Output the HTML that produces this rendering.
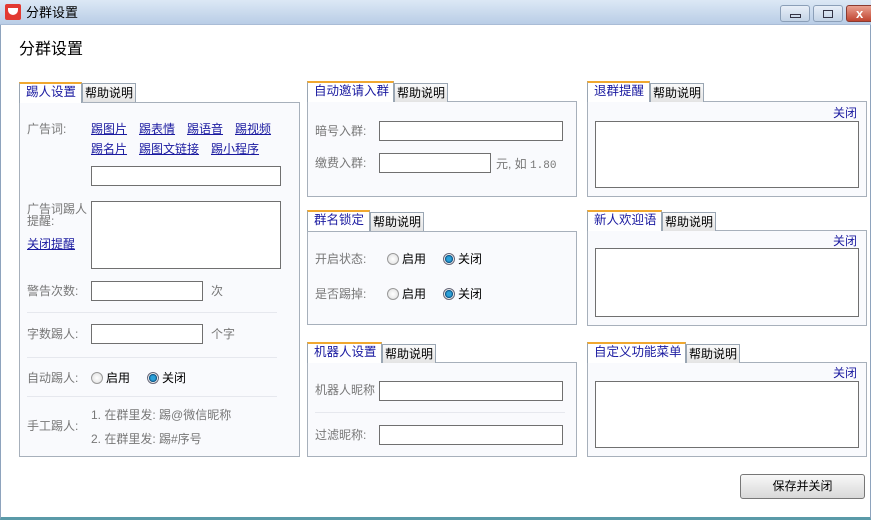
<!DOCTYPE html>
<html><head><meta charset="utf-8"><style>
*{box-sizing:border-box;margin:0;padding:0}
body{width:871px;height:520px;position:relative;overflow:hidden;background:#fff;font-family:"Liberation Sans","Noto Sans CJK SC",sans-serif;font-size:12px;line-height:14px;color:#000}
.a{position:absolute}
.tb{left:0;top:0;width:871px;height:25px;background:linear-gradient(#dce8f5,#b9cde6);border-bottom:1px solid #a9bcd6}
.frame{left:0;top:25px;width:871px;height:495px;border-left:1px solid #8ea3bd;border-right:1px solid #8ea3bd;border-bottom:3px solid #5a9aa8}
.tab{height:21px;border:1px solid #9aa6b3;border-bottom:none;background:#fff;border-top:2px solid #f0a830;color:#1a1aa0;padding:1px 6px 0;white-space:nowrap;font-size:12.5px}
.tab2{height:19px;border:1px solid #9aa6b3;border-bottom:none;background:linear-gradient(#fafafa,#e4e4e4);padding:1px 2px 0;white-space:nowrap;font-size:12px;line-height:16px}
.box{border:1px solid #a7b0bb;background:#f9fafd}
.in{border:1px solid #707070;background:#fff}
.g{color:#777}
.lk{color:#1a1aa0;text-decoration:underline}
.rd{display:inline-block;width:12px;height:12px;border-radius:50%;border:1px solid #999;background:radial-gradient(#fff,#ddd);vertical-align:-2px;margin-right:3px}
.rd.on{background:radial-gradient(#2aa0d8 30%,#0d4f80 55%,#eee 60%);border-color:#667}
.hr{height:1px;background:#e6e8ee}
.bl{color:#1a1aa0}
</style></head><body>
<div class="a frame"></div>
<div class="a tb"></div>
<div class="a" style="left:5px;top:4px;width:16px;height:16px;background:#e23a32;border-radius:2px"><div class="a" style="left:3px;top:4px;width:10px;height:7px;border-radius:0 0 6px 6px;background:#fff"></div></div>
<div class="a" style="left:26px;top:5px;font-size:13px;line-height:15px">分群设置</div>
<div class="a" style="left:780px;top:5px;width:30px;height:17px;border:1px solid #8b9fb8;border-radius:3px;background:linear-gradient(#e8eff8,#c3d3e6)"><div class="a" style="left:9px;top:8px;width:11px;height:4px;border:1px solid #334"></div></div>
<div class="a" style="left:813px;top:5px;width:30px;height:17px;border:1px solid #8b9fb8;border-radius:3px;background:linear-gradient(#e8eff8,#c3d3e6)"><div class="a" style="left:9px;top:4px;width:10px;height:8px;border:1px solid #334"></div></div>
<div class="a" style="left:846px;top:5px;width:28px;height:17px;border:1px solid #8a3a30;border-radius:3px;background:linear-gradient(#e9a090,#c04530);color:#fff;font-weight:bold;font-size:13px;padding-left:9px;line-height:15px">x</div>
<div class="a" style="left:19px;top:40px;font-size:16px;line-height:20px">分群设置</div>

<!-- left panel -->
<div class="a box" style="left:19px;top:102px;width:281px;height:355px"></div>
<div class="a tab" style="left:19px;top:82px;width:63px;height:21px">踢人设置</div>
<div class="a tab2" style="left:82px;top:83px;">帮助说明</div>
<div class="a g" style="left:27px;top:122px">广告词:</div>
<div class="a lk" style="left:91px;top:122px">踢图片</div>
<div class="a lk" style="left:139px;top:122px">踢表情</div>
<div class="a lk" style="left:187px;top:122px">踢语音</div>
<div class="a lk" style="left:235px;top:122px">踢视频</div>
<div class="a lk" style="left:91px;top:142px">踢名片</div>
<div class="a lk" style="left:139px;top:142px">踢图文链接</div>
<div class="a lk" style="left:211px;top:142px">踢小程序</div>
<div class="a in" style="left:91px;top:166px;width:190px;height:20px"></div>
<div class="a g" style="left:27px;top:203px;line-height:12px;width:62px">广告词踢人提醒:</div>
<div class="a lk" style="left:27px;top:237px">关闭提醒</div>
<div class="a in" style="left:91px;top:201px;width:190px;height:68px"></div>
<div class="a g" style="left:27px;top:284px">警告次数:</div>
<div class="a in" style="left:91px;top:281px;width:112px;height:20px"></div>
<div class="a g" style="left:211px;top:284px">次</div>
<div class="a hr" style="left:27px;top:312px;width:250px"></div>
<div class="a g" style="left:27px;top:327px">字数踢人:</div>
<div class="a in" style="left:91px;top:324px;width:112px;height:20px"></div>
<div class="a g" style="left:211px;top:327px">个字</div>
<div class="a hr" style="left:27px;top:357px;width:250px"></div>
<div class="a g" style="left:27px;top:371px">自动踢人:</div>
<div class="a" style="left:91px;top:371px"><span class="rd"></span>启用</div>
<div class="a" style="left:147px;top:371px"><span class="rd on"></span>关闭</div>
<div class="a hr" style="left:27px;top:396px;width:250px"></div>
<div class="a g" style="left:91px;top:408px">1. 在群里发: 踢@微信昵称</div>
<div class="a g" style="left:27px;top:419px">手工踢人:</div>
<div class="a g" style="left:91px;top:432px">2. 在群里发: 踢#序号</div>

<!-- middle -->
<div class="a box" style="left:307px;top:101px;width:270px;height:96px"></div>
<div class="a tab" style="left:307px;top:81px;width:87px">自动邀请入群</div>
<div class="a tab2" style="left:394px;top:83px;">帮助说明</div>
<div class="a g" style="left:315px;top:124px">暗号入群:</div>
<div class="a in" style="left:379px;top:121px;width:184px;height:20px"></div>
<div class="a g" style="left:315px;top:156px">缴费入群:</div>
<div class="a in" style="left:379px;top:153px;width:112px;height:20px"></div>
<div class="a g" style="left:496px;top:157px">元, 如 <span style="font-family:'Liberation Mono',monospace;font-size:11px">1.80</span></div>

<div class="a box" style="left:307px;top:231px;width:270px;height:94px"></div>
<div class="a tab" style="left:307px;top:210px;width:63px">群名锁定</div>
<div class="a tab2" style="left:370px;top:212px;">帮助说明</div>
<div class="a g" style="left:315px;top:252px">开启状态:</div>
<div class="a" style="left:387px;top:252px"><span class="rd"></span>启用</div>
<div class="a" style="left:443px;top:252px"><span class="rd on"></span>关闭</div>
<div class="a g" style="left:315px;top:287px">是否踢掉:</div>
<div class="a" style="left:387px;top:287px"><span class="rd"></span>启用</div>
<div class="a" style="left:443px;top:287px"><span class="rd on"></span>关闭</div>

<div class="a box" style="left:307px;top:362px;width:270px;height:95px"></div>
<div class="a tab" style="left:307px;top:342px;width:75px">机器人设置</div>
<div class="a tab2" style="left:382px;top:344px;">帮助说明</div>
<div class="a g" style="left:315px;top:383px">机器人昵称</div>
<div class="a in" style="left:379px;top:381px;width:184px;height:20px"></div>
<div class="a hr" style="left:315px;top:412px;width:250px"></div>
<div class="a g" style="left:315px;top:428px">过滤昵称:</div>
<div class="a in" style="left:379px;top:425px;width:184px;height:20px"></div>

<!-- right -->
<div class="a box" style="left:587px;top:101px;width:280px;height:96px"></div>
<div class="a tab" style="left:587px;top:81px;width:63px">退群提醒</div>
<div class="a tab2" style="left:650px;top:83px;">帮助说明</div>
<div class="a bl" style="left:833px;top:106px">关闭</div>
<div class="a in" style="left:595px;top:121px;width:264px;height:67px"></div>

<div class="a box" style="left:587px;top:230px;width:280px;height:96px"></div>
<div class="a tab" style="left:587px;top:210px;width:75px">新人欢迎语</div>
<div class="a tab2" style="left:662px;top:212px;">帮助说明</div>
<div class="a bl" style="left:833px;top:234px">关闭</div>
<div class="a in" style="left:595px;top:248px;width:264px;height:69px"></div>

<div class="a box" style="left:587px;top:362px;width:280px;height:95px"></div>
<div class="a tab" style="left:587px;top:342px;width:99px">自定义功能菜单</div>
<div class="a tab2" style="left:686px;top:344px;">帮助说明</div>
<div class="a bl" style="left:833px;top:366px">关闭</div>
<div class="a in" style="left:595px;top:381px;width:264px;height:67px"></div>

<div class="a" style="left:740px;top:474px;width:125px;height:25px;border:1px solid #777;border-radius:3px;background:linear-gradient(#f8f8f8,#d8d8d8);text-align:center;line-height:23px">保存并关闭</div>
</body></html>
